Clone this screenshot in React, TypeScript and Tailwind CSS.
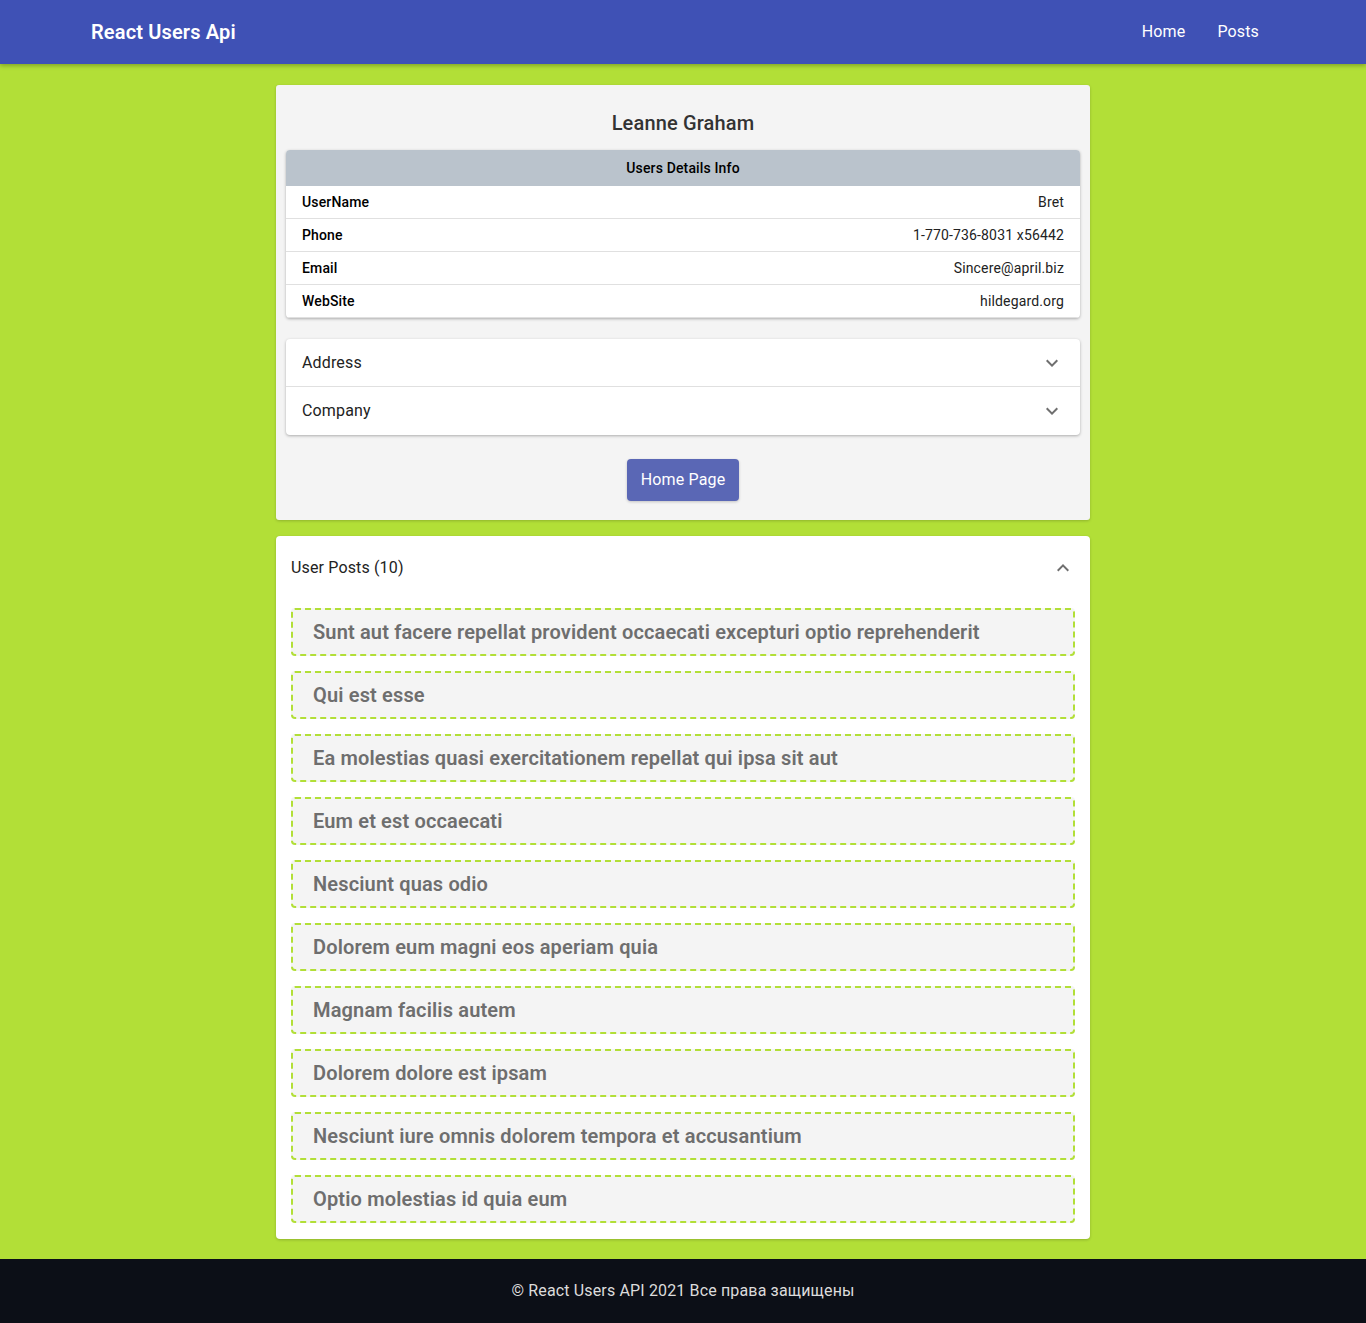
const details = [
    { label: "UserName", value: "Bret" },
    { label: "Phone", value: "1-770-736-8031 x56442" },
    { label: "Email", value: "Sincere@april.biz" },
    { label: "WebSite", value: "hildegard.org" },
];

const posts = [
    "Sunt aut facere repellat provident occaecati excepturi optio reprehenderit",
    "Qui est esse",
    "Ea molestias quasi exercitationem repellat qui ipsa sit aut",
    "Eum et est occaecati",
    "Nesciunt quas odio",
    "Dolorem eum magni eos aperiam quia",
    "Magnam facilis autem",
    "Dolorem dolore est ipsam",
    "Nesciunt iure omnis dolorem tempora et accusantium",
    "Optio molestias id quia eum",
];

const Chevron = ({ up = false }: { up?: boolean }) => (
    <svg width="24" height="24" viewBox="0 0 24 24" className={`fill-[#6f6f6f] ${up ? 'rotate-180' : ''}`}>
        <path d="M16.59 8.59 12 13.17 7.41 8.59 6 10l6 6 6-6z" />
    </svg>
);

const Header = () => (
    <header className="h-16 bg-[#3f51b5] shadow-[0_2px_4px_rgba(0,0,0,0.25)] flex items-center justify-between pl-[91px] pr-[107px] relative z-10">
        <h1 className="text-white text-[20px] font-semibold tracking-[0.15px]">React Users Api</h1>
        <nav className="flex gap-8 text-white text-[16px] tracking-[0.15px]">
            <a href="#">Home</a>
            <a href="#">Posts</a>
        </nav>
    </header>
);

const App = () => {
    return (
        <div className="min-h-screen flex flex-col bg-[#b2df37] font-['Roboto',sans-serif]">
            <Header />
            <main className="flex-1 flex flex-col items-center pt-[21px] pb-5 gap-4">
                <section className="w-[814px] bg-[#f4f4f4] rounded-[3px] shadow-[0_1px_3px_rgba(0,0,0,0.2)] px-[10px] pt-[26px] pb-[19px]">
                    <h2 className="text-center text-[20px] font-medium text-[#333] leading-6 mb-[15px] tracking-[0.15px]">Leanne Graham</h2>
                    <div className="bg-white rounded-[4px] shadow-[0_1px_3px_rgba(0,0,0,0.3)] overflow-hidden">
                        <div className="h-9 bg-[#bac3cc] flex items-center justify-center text-[14px] font-medium text-black tracking-[0.15px]">
                            Users Details Info
                        </div>
                        {details.map((d) => (
                            <div
                                key={d.label}
                                className="h-[33px] flex items-center justify-between px-4 text-[14px] text-[#222] tracking-[0.15px] border-b border-[#e0e0e0]"
                            >
                                <span className="font-medium text-black">{d.label}</span>
                                <span>{d.value}</span>
                            </div>
                        ))}
                    </div>
                    <div className="mt-[21px] bg-white rounded-[4px] shadow-[0_1px_3px_rgba(0,0,0,0.3)]">
                        <div className="h-12 flex items-center justify-between px-4 border-b border-[#e0e0e0] text-[16px] text-[#222] tracking-[0.15px]">
                            <span>Address</span>
                            <Chevron />
                        </div>
                        <div className="h-12 flex items-center justify-between px-4 text-[16px] text-[#222] tracking-[0.15px]">
                            <span>Company</span>
                            <Chevron />
                        </div>
                    </div>
                    <div className="flex justify-center mt-6">
                        <button className="h-[42px] px-[14px] rounded-[4px] bg-[#5a67b5] text-white text-[16px] tracking-[0.15px] shadow-[0_1px_3px_rgba(0,0,0,0.2)]">
                            Home Page
                        </button>
                    </div>
                </section>

                <section className="w-[814px] bg-white rounded-[4px] shadow-[0_1px_3px_rgba(0,0,0,0.2)]">
                    <div className="h-16 flex items-center justify-between px-[15px] text-[16px] text-[#222] tracking-[0.15px]">
                        <span>User Posts (10)</span>
                        <Chevron up />
                    </div>
                    <ul className="px-[15px] pt-2 pb-4 flex flex-col gap-[15px]">
                        {posts.map((p) => (
                            <li
                                key={p}
                                className="h-12 flex items-center pl-5 bg-[#f4f4f4] border-2 border-dashed border-[#b2df37] rounded-[4px] text-[20px] font-semibold tracking-[0.15px] text-[#6e6e6e]"
                            >
                                {p}
                            </li>
                        ))}
                    </ul>
                </section>
            </main>
            <footer className="h-16 bg-[#0c0f17] flex items-center justify-center text-[16px] text-[#dcdcdc] tracking-[0.15px]">
                © React Users API 2021 Все права защищены
            </footer>
        </div>
    );
};

export default App;
